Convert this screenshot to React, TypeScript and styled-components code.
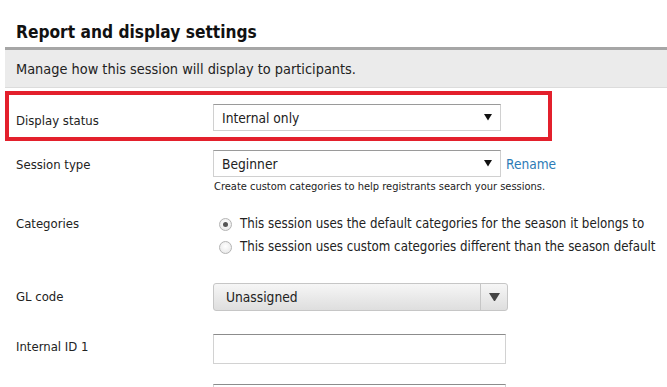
import React from "react";
import styled, { createGlobalStyle } from "styled-components";

const Global = createGlobalStyle`
  html, body { margin: 0; padding: 0; background: #fff; }
  body { font-family: "DejaVu Sans Condensed", "DejaVu Sans", sans-serif; font-stretch: condensed; color: #222; }
`;

const Page = styled.div`
  width: 667px;
  padding-left: 5px;
  box-sizing: border-box;
`;

const Heading = styled.h2`
  margin: 0;
  height: 50px;
  box-sizing: border-box;
  padding: 21px 0 0 11px;
  font-size: 17.2px;
  font-weight: bold;
  color: #111;
  border-bottom: 3px solid #a6a6a6;
  line-height: 22px;
`;

const Band = styled.div`
  height: 38px;
  box-sizing: border-box;
  background: #ebebeb;
  border-bottom: 1px solid #dcdcdc;
  padding: 0 0 0 11px;
  font-size: 14.4px;
  display: flex;
  align-items: center;
  color: #222;
`;

const Highlight = styled.div`
  margin-top: 3px;
  width: 547px;
  box-sizing: border-box;
  border: 4px solid #e3202c;
  padding: 9px 0 6px;
`;

const Row = styled.div<{ $top?: number }>`
  display: flex;
  align-items: flex-start;
  margin-top: ${(p) => p.$top ?? 0}px;
`;

const Label = styled.div<{ $inset?: boolean; $pt?: number }>`
  width: ${(p) => (p.$inset ? 204 : 208)}px;
  box-sizing: border-box;
  padding-left: ${(p) => (p.$inset ? 7 : 11)}px;
  padding-top: ${(p) => p.$pt ?? 6}px;
  flex-shrink: 0;
  font-size: 13px;
  line-height: 16px;
  color: #222;
`;

const Field = styled.div`
  display: flex;
  flex-direction: column;
`;

const Inline = styled.div`
  display: flex;
  align-items: center;
  gap: 5px;
`;

const SelectBox = styled.div`
  width: 288px;
  height: 27px;
  box-sizing: border-box;
  border: 1px solid #d0d0d0;
  border-top-color: #9a9a9a;
  background: #fff;
  display: flex;
  align-items: center;
  justify-content: space-between;
  padding: 0 8px 0 8px;
  font-size: 13.7px;
  color: #222;
`;

const Rename = styled.a`
  font-size: 13.6px;
  color: #2c7bb6;
  text-decoration: none;
`;

const Hint = styled.div`
  font-size: 11px;
  color: #222;
  margin-top: 3px;
  padding-left: 1px;
`;

const RadioList = styled.div`
  display: flex;
  flex-direction: column;
  gap: 7px;
  padding-left: 6px;
`;

const RadioRow = styled.label`
  display: flex;
  align-items: center;
  gap: 8px;
  font-size: 13.2px;
  line-height: 16px;
  color: #222;
  white-space: nowrap;
`;

const RadioDot = styled.span<{ $on?: boolean }>`
  width: 13px;
  height: 13px;
  border-radius: 50%;
  box-sizing: border-box;
  border: 1px solid #b4b4b4;
  background: radial-gradient(circle at 50% 40%, #ffffff 0%, #e4e4e4 100%);
  display: flex;
  align-items: center;
  justify-content: center;
  flex-shrink: 0;
  &::after {
    content: "";
    display: ${(p) => (p.$on ? "block" : "none")};
    width: 5px;
    height: 5px;
    border-radius: 50%;
    background: #555;
  }
`;

const ButtonSelect = styled.div`
  width: 295px;
  height: 28px;
  box-sizing: border-box;
  border: 1px solid #c6c6c6;
  border-radius: 3px;
  background: linear-gradient(#f6f6f6, #dedede);
  display: flex;
  align-items: stretch;
  font-size: 13.7px;
  color: #222;
`;

const ButtonText = styled.span`
  flex: 1;
  display: flex;
  align-items: center;
  padding-left: 12px;
`;

const ButtonArrow = styled.span`
  width: 26px;
  border-left: 1px solid #c6c6c6;
  display: flex;
  align-items: center;
  justify-content: center;
`;

const TextInput = styled.input`
  width: 293px;
  height: 30px;
  box-sizing: border-box;
  border: 1px solid #d2d2d2;
  border-top-color: #8c8c8c;
  margin: 0;
  font: inherit;
  font-size: 13px;
  padding: 0 6px;
  outline: none;
`;

const Arrow = ({ color = "#111", w = 8 }: { color?: string; w?: number }) => (
  <svg width={w} height={w * 0.8} viewBox="0 0 10 8">
    <path d="M0 0 H10 L5 8 Z" fill={color} />
  </svg>
);

export default function App() {
  return (
    <>
      <Global />
      <Page>
        <Heading>Report and display settings</Heading>
        <Band>Manage how this session will display to participants.</Band>
        <Highlight>
          <Row>
            <Label $inset $pt={9}>Display status</Label>
            <SelectBox>
              <span>Internal only</span>
              <Arrow />
            </SelectBox>
          </Row>
        </Highlight>
        <Row $top={9}>
          <Label $pt={7}>Session type</Label>
          <Field>
            <Inline>
              <SelectBox>
                <span>Beginner</span>
                <Arrow />
              </SelectBox>
              <Rename href="#">Rename</Rename>
            </Inline>
            <Hint>Create custom categories to help registrants search your sessions.</Hint>
          </Field>
        </Row>
        <Row $top={23}>
          <Label $pt={0}>Categories</Label>
          <RadioList>
            <RadioRow>
              <RadioDot $on />
              This session uses the default categories for the season it belongs to
            </RadioRow>
            <RadioRow>
              <RadioDot />
              This session uses custom categories different than the season default
            </RadioRow>
          </RadioList>
        </Row>
        <Row $top={28}>
          <Label $pt={6}>GL code</Label>
          <ButtonSelect>
            <ButtonText>Unassigned</ButtonText>
            <ButtonArrow>
              <Arrow color="#444" w={11} />
            </ButtonArrow>
          </ButtonSelect>
        </Row>
        <Row $top={23}>
          <Label $pt={5}>Internal ID 1</Label>
          <TextInput />
        </Row>
        <Row $top={20}>
          <Label $pt={7}></Label>
          <TextInput />
        </Row>
      </Page>
    </>
  );
}
